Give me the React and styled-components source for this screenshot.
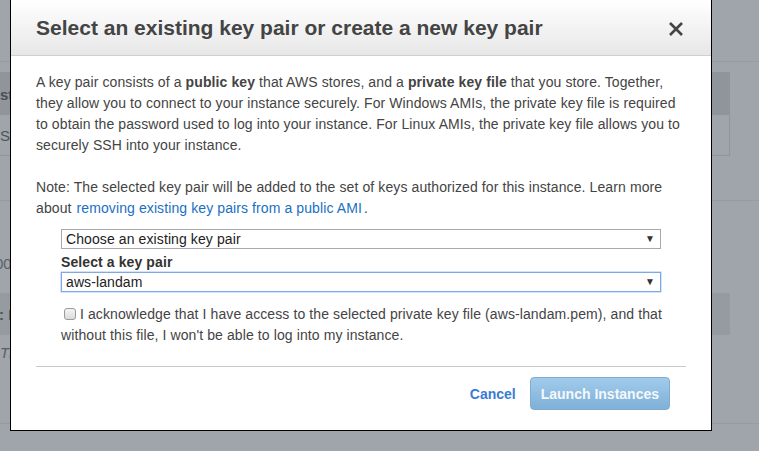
import React from "react";
import styled, { createGlobalStyle } from "styled-components";

const GlobalStyle = createGlobalStyle`
  html, body {
    margin: 0;
    padding: 0;
    height: 100%;
    overflow: hidden;
  }
  body {
    background: #9fa5ab;
    font-family: "Liberation Sans", Arial, sans-serif;
  }
`;

/* dimmed page behind the modal */
const Page = styled.div`
  position: relative;
  width: 759px;
  height: 451px;
  overflow: hidden;
  background: #9fa5ab;
  color: #4f555b;
  font-size: 14px;
`;

const TopBar = styled.div`
  height: 61px;
  border-bottom: 1px solid #959ba1;
`;

const Table = styled.div`
  margin: 10px 29px 0 -1px;
  border: 1px solid #8f959b;
`;

const TableHead = styled.div`
  height: 42px;
  background: #8f959b;
  display: flex;
  align-items: center;
  font-weight: bold;
  font-size: 15px;
  color: #4a4f55;
`;

const TableRow = styled.div`
  height: 40px;
  display: flex;
  align-items: center;
  font-size: 15px;
`;

const Divider = styled.div`
  margin-top: ${(p) => p.$top}px;
  border-top: 1px solid #959ba1;
`;

const Line = styled.div`
  height: ${(p) => p.$h}px;
  display: flex;
  align-items: center;
  margin-left: ${(p) => p.$shift || 0}px;
  font-style: ${(p) => (p.$italic ? "italic" : "normal")};
  font-size: 15px;
  color: #5a6066;
`;

const Band = styled.div`
  margin: 20px 29px 0 -1px;
  height: 42px;
  background: #959ba1;
  display: flex;
  align-items: center;
  font-weight: bold;
  font-size: 15px;
  color: #4a4f55;
`;

/* modal */
const Modal = styled.div`
  position: absolute;
  left: 10px;
  top: -1px;
  width: 700px;
  background: #fff;
  border: 1px solid #000;
  color: #444;
`;

const Header = styled.div`
  height: 55px;
  padding: 0 27px 0 25px;
  display: flex;
  align-items: center;
  justify-content: space-between;
  background: linear-gradient(to bottom, #ffffff 0%, #e7e7e7 100%);
  border-bottom: 1px solid #cfcfcf;
`;

const Title = styled.h2`
  margin: 0;
  font-size: 21px;
  font-weight: bold;
  color: #444;
`;

const Close = styled.button`
  border: 0;
  background: transparent;
  padding: 0;
  margin-top: 2px;
  width: 16px;
  height: 16px;
  cursor: pointer;
  display: flex;
`;

const Body = styled.div`
  padding: 16px 25px 0 25px;
  font-size: 14px;
  line-height: 21px;
  letter-spacing: 0.1px;
`;

const Para = styled.p`
  margin: 0 0 ${(p) => p.$gap}px 0;
`;

const Link = styled.a`
  color: #1a6fc4;
  text-decoration: none;
  margin: 0 2px 0 5px;
`;

const Form = styled.div`
  margin-left: 25px;
  width: 600px;
`;

const SelectBox = styled.div`
  height: 18px;
  border: 1px solid ${(p) => (p.$focused ? "#7fa8e6" : "#a9a9a9")};
  box-shadow: ${(p) => (p.$focused ? "0 0 0 0.5px #a9c6f0" : "none")};
  display: flex;
  align-items: center;
  justify-content: space-between;
  padding: 0 5px 0 4px;
  line-height: 18px;
  color: #222;
`;

const Caret = styled.span`
  font-size: 10px;
  color: #333;
`;

const Label = styled.div`
  margin-top: 3px;
  font-weight: bold;
  line-height: 20px;
  color: #333;
`;

const Ack = styled.label`
  display: block;
  margin: 12px 0 0 25px;
  line-height: 21px;
`;

const Check = styled.input`
  appearance: none;
  width: 12px;
  height: 12px;
  margin: 0 4px 0 3px;
  vertical-align: -1px;
  border: 1px solid #9a9a9a;
  border-radius: 3px;
  background: linear-gradient(to bottom, #f4f4f4, #dcdcdc);
`;

const Rule = styled.hr`
  margin: 20px 0 0 0;
  border: 0;
  border-top: 1px solid #c8c8c8;
`;

const Footer = styled.div`
  display: flex;
  justify-content: flex-end;
  align-items: center;
  gap: 14px;
  padding: 10px 41px 20px 0;
`;

const TextButton = styled.button`
  border: 0;
  background: transparent;
  padding: 0;
  font: bold 14px "Liberation Sans", Arial, sans-serif;
  color: #3b7bd6;
  margin-top: 1px;
  cursor: pointer;
`;

const PrimaryButton = styled.button`
  height: 33px;
  padding: 0 10px;
  border: 1px solid #7fabd2;
  border-radius: 4px;
  background: linear-gradient(to bottom, #a1cbec 0%, #7fb0d7 100%);
  color: #f4f8fc;
  font: bold 14px "Liberation Sans", Arial, sans-serif;
  cursor: default;
`;

export default function App() {
  return (
    <>
      <GlobalStyle />
      <Page>
        <TopBar />
        <Table>
          <TableHead>sta</TableHead>
          <TableRow>S</TableRow>
        </Table>
        <Divider $top={44} />
        <Line $h={52} />
        <Line $h={20} $shift={-5}>
          00
        </Line>
        <Band>: F</Band>
        <Line $h={34} $italic>
          Th
        </Line>
        <Divider $top={54} />

        <Modal role="dialog">
          <Header>
            <Title>Select an existing key pair or create a new key pair</Title>
            <Close aria-label="Close">
              <svg width="16" height="16" viewBox="0 0 16 16">
                <path
                  d="M2 2 L14 14 M14 2 L2 14"
                  stroke="#444"
                  strokeWidth="2.6"
                  strokeLinecap="butt"
                />
              </svg>
            </Close>
          </Header>
          <Body>
            <Para $gap={21}>
              A key pair consists of a <b>public key</b> that AWS stores, and a{" "}
              <b>private key file</b> that you store. Together, they allow you to
              connect to your instance securely. For Windows AMIs, the private key
              file is required to obtain the password used to log into your
              instance. For Linux AMIs, the private key file allows you to securely
              SSH into your instance.
            </Para>
            <Para $gap={10}>
              Note: The selected key pair will be added to the set of keys
              authorized for this instance. Learn more about
              <Link href="#">removing existing key pairs from a public AMI</Link>.
            </Para>
            <Form>
              <SelectBox>
                <span>Choose an existing key pair</span>
                <Caret>▼</Caret>
              </SelectBox>
              <Label>Select a key pair</Label>
              <SelectBox $focused>
                <span>aws-landam</span>
                <Caret>▼</Caret>
              </SelectBox>
            </Form>
            <Ack>
              <Check type="checkbox" />I acknowledge that I have access to the
              selected private key file (aws-landam.pem), and that without this
              file, I won't be able to log into my instance.
            </Ack>
            <Rule />
          </Body>
          <Footer>
            <TextButton>Cancel</TextButton>
            <PrimaryButton>Launch Instances</PrimaryButton>
          </Footer>
        </Modal>
      </Page>
    </>
  );
}
